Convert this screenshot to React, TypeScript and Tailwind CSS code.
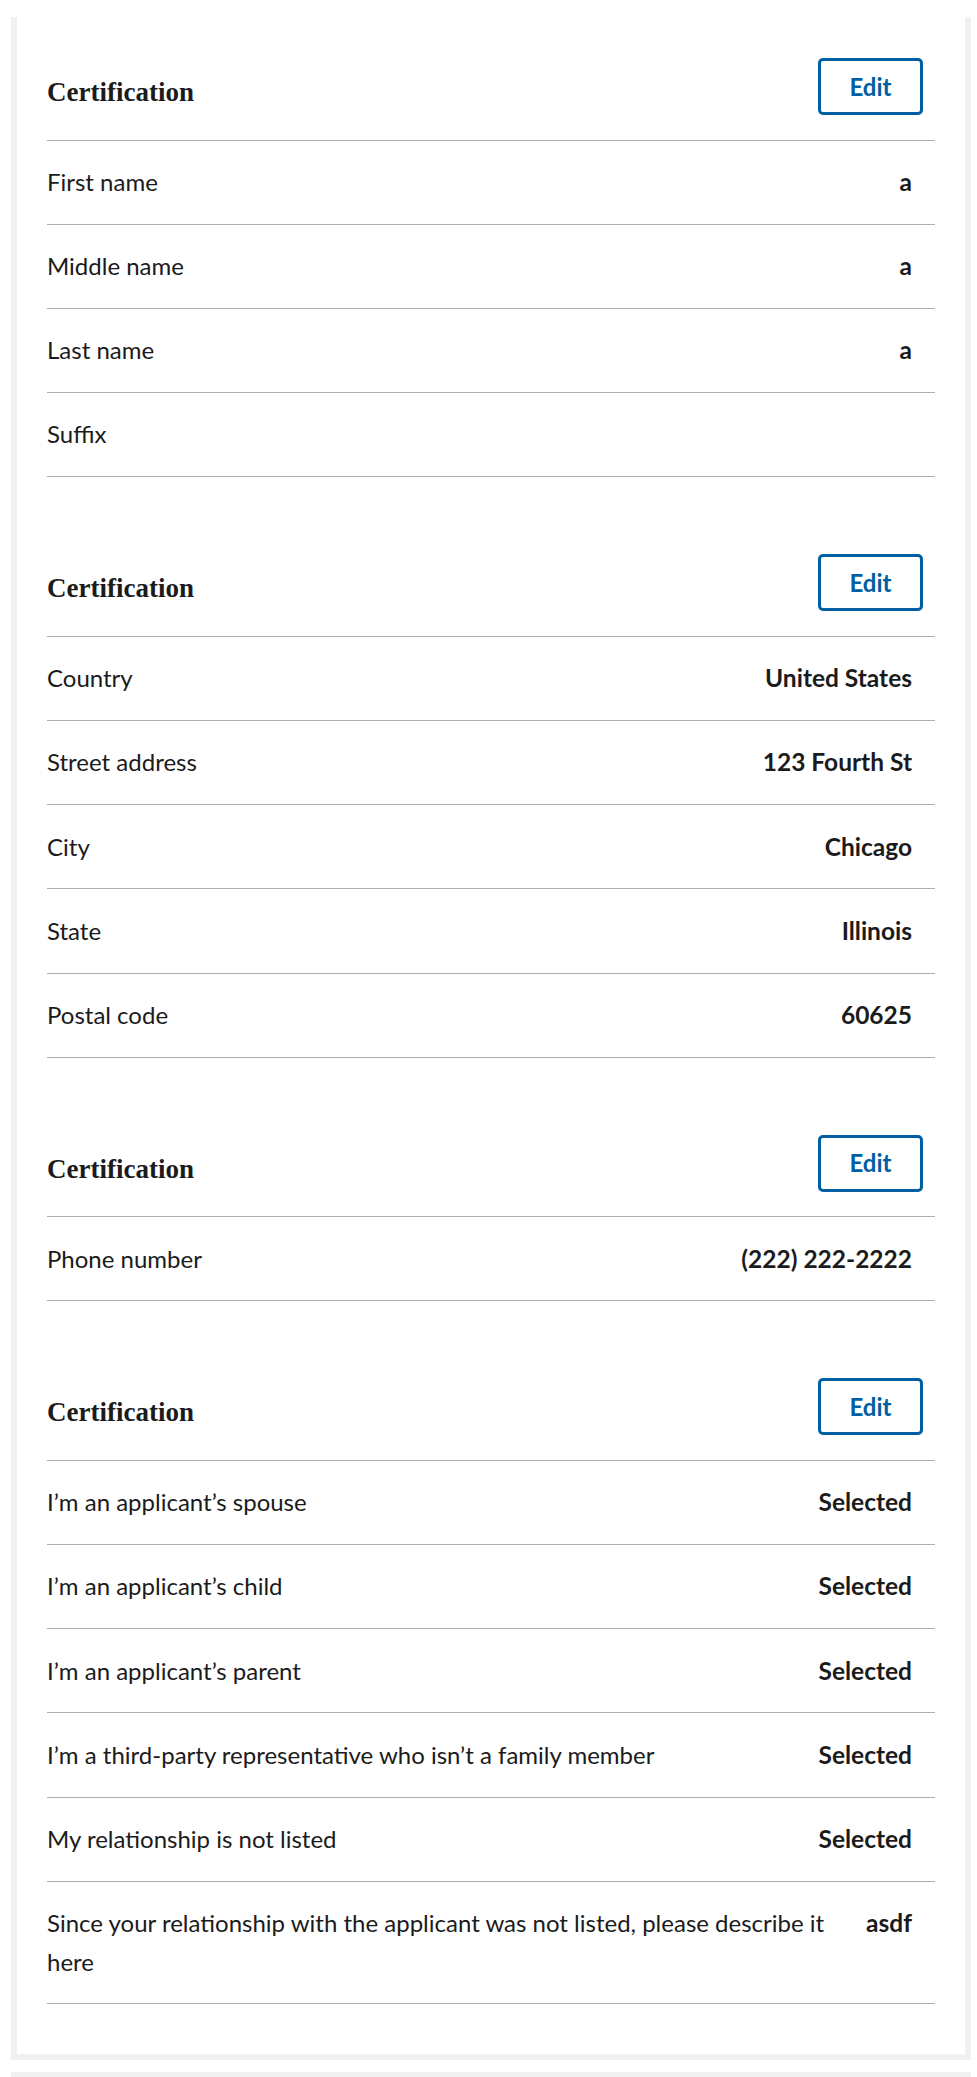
type Row = { label: string; value?: string };

const sections: Row[][] = [
  [
    { label: "First name", value: "a" },
    { label: "Middle name", value: "a" },
    { label: "Last name", value: "a" },
    { label: "Suffix" },
  ],
  [
    { label: "Country", value: "United States" },
    { label: "Street address", value: "123 Fourth St" },
    { label: "City", value: "Chicago" },
    { label: "State", value: "Illinois" },
    { label: "Postal code", value: "60625" },
  ],
  [{ label: "Phone number", value: "(222) 222-2222" }],
  [
    { label: "I’m an applicant’s spouse", value: "Selected" },
    { label: "I’m an applicant’s child", value: "Selected" },
    { label: "I’m an applicant’s parent", value: "Selected" },
    { label: "I’m a third-party representative who isn’t a family member", value: "Selected" },
    { label: "My relationship is not listed", value: "Selected" },
    {
      label: "Since your relationship with the applicant was not listed, please describe it here",
      value: "asdf",
    },
  ],
];

function ReviewSection({ rows, first }: { rows: Row[]; first?: boolean }) {
  return (
    <section className={first ? "" : "mt-[77px]"}>
      <div className="flex items-start justify-between border-b border-[#a9aeb1] pb-[24.5px]">
        <h4 className="mt-[19px] font-['Liberation_Serif',serif] text-[27px] font-bold leading-[30px] text-[#1b1b1b]">
          Certification
        </h4>
        <button className="mr-[12px] h-[57px] w-[105px] rounded-[5px] border-[3px] border-[#005ea2] bg-white text-[24px] font-bold text-[#005ea2]">
          Edit
        </button>
      </div>
      <dl>
        {rows.map((r) => (
          <div
            key={r.label}
            className="flex border-b border-[#a9aeb1] py-[22.4px] text-[24px] leading-[38.4px] text-[#1b1b1b]"
          >
            <dt className="min-w-0 flex-1">{r.label}</dt>
            <dd className="shrink-0 pl-[28px] pr-[23px] text-right text-[24.5px] font-bold">{r.value}</dd>
          </div>
        ))}
      </dl>
    </section>
  );
}

export default function App() {
  return (
    <div className="min-h-screen bg-white pt-[17px] font-['Lato','Noto_Sans',sans-serif]">
      <div className="ml-[11px] w-[960px] border-x-[6px] border-b-[6px] border-[#f1f1f1] bg-white px-[30px] pb-[50px] pt-[41px]">
        {sections.map((rows, i) => (
          <ReviewSection key={i} rows={rows} first={i === 0} />
        ))}
      </div>
      <div className="ml-[11px] mt-[12px] h-[40px] w-[960px] bg-[#f1f1f1]" />
    </div>
  );
}
